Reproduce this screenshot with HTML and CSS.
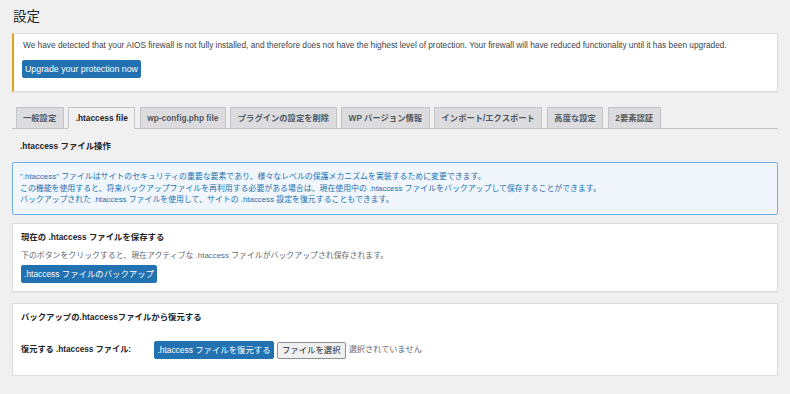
FILE: index.html
```html
<!DOCTYPE html>
<html lang="ja">
<head>
<meta charset="utf-8">
<title>設定</title>
<link rel="stylesheet" href="styles.css">
</head>
<body>
<div class="wrap">
  <h1 class="page-title">設定</h1>

  <div class="notice">
    <p class="notice-text">We have detected that your AIOS firewall is not fully installed, and therefore does not have the highest level of protection. Your firewall will have reduced functionality until it has been upgraded.</p>
    <button class="btn btn-primary notice-btn">Upgrade your protection now</button>
  </div>

  <nav class="tabs">
    <span class="tab">一般設定</span>
    <span class="tab active">.htaccess file</span>
    <span class="tab">wp-config.php file</span>
    <span class="tab">プラグインの設定を削除</span>
    <span class="tab">WP バージョン情報</span>
    <span class="tab">インポート/エクスポート</span>
    <span class="tab">高度な設定</span>
    <span class="tab">2要素認証</span>
  </nav>

  <h2 class="section-title">.htaccess ファイル操作</h2>

  <div class="info">
    <p>".htaccess" ファイルはサイトのセキュリティの重要な要素であり、様々なレベルの保護メカニズムを実装するために変更できます。</p>
    <p>この機能を使用すると、将来バックアップファイルを再利用する必要がある場合は、現在使用中の .htaccess ファイルをバックアップして保存することができます。</p>
    <p>バックアップされた .htaccess ファイルを使用して、サイトの .htaccess 設定を復元することもできます。</p>
  </div>

  <div class="card card-save">
    <h3 class="card-title">現在の .htaccess ファイルを保存する</h3>
    <p class="card-desc">下のボタンをクリックすると、現在アクティブな .htaccess ファイルがバックアップされ保存されます。</p>
    <button class="btn btn-primary">.htaccess ファイルのバックアップ</button>
  </div>

  <div class="card card-restore">
    <h3 class="card-title">バックアップの.htaccessファイルから復元する</h3>
    <div class="restore-row">
      <span class="restore-label">復元する .htaccess ファイル:</span>
      <button class="btn btn-primary">.htaccess ファイルを復元する</button>
      <span class="file-btn">ファイルを選択</span>
      <span class="file-none">選択されていません</span>
    </div>
  </div>
</div>
</body>
</html>
```

FILE: styles.css
```css
* { box-sizing: border-box; }

html, body {
  margin: 0;
  padding: 0;
  background: #f0f0f1;
}

body {
  font-family: "Liberation Sans", "Noto Sans CJK JP", sans-serif;
  font-size: 7.9px;
  line-height: 1.5;
  color: #3c434a;
}

.wrap {
  padding: 0 12px 0 12px;
}

.page-title {
  margin: 0;
  padding: 8px 0 0 1px;
  height: 33px;
  font-size: 13.5px;
  font-weight: 400;
  line-height: 18px;
  color: #1d2327;
}

.notice {
  background: #fff;
  border: 1px solid #dcdcde;
  border-left: 2px solid #dba617;
  height: 59px;
  padding: 5px 9px 0 8px;
  box-shadow: 0 1px 1px rgba(0,0,0,0.04);
}

.notice-text {
  margin: 0 0 9px 1px;
  font-size: 8.3px;
  line-height: 12px;
  color: #3c434a;
}

.btn {
  display: inline-flex;
  align-items: center;
  justify-content: center;
  height: 18px;
  padding: 0;
  border: 1px solid #2271b1;
  border-radius: 2px;
  background: #2271b1;
  color: #fff;
  font-family: inherit;
  font-size: 8px;
  line-height: 1;
  white-space: nowrap;
  cursor: pointer;
}

.notice-btn {
  width: 119px;
  font-size: 8.8px;
}

.tabs {
  display: flex;
  gap: 4.5px;
  margin-top: 15px;
  padding-left: 3.5px;
  border-bottom: 1px solid #c3c4c7;
  height: 22px;
}

.tab {
  display: flex;
  align-items: center;
  height: 21px;
  padding: 0 6.5px;
  background: #dcdcde;
  border: 1px solid #c3c4c7;
  border-bottom: none;
  font-size: 8.3px;
  font-weight: 700;
  color: #50575e;
  white-space: nowrap;
}

.tab.active {
  background: #f0f0f1;
  color: #1d2327;
  height: 22px;
  border-bottom: 1px solid #f0f0f1;
}

.section-title {
  margin: 0;
  padding: 11px 0 0 8px;
  height: 33px;
  font-size: 8.4px;
  font-weight: 700;
  line-height: 12px;
  color: #1d2327;
}

.info {
  background: #f0f6fc;
  border: 1px solid #72aee6;
  border-radius: 2px;
  height: 53px;
  padding: 8px 7px 0 7px;
  color: #2271b1;
}

.info p {
  margin: 0;
  line-height: 11.6px;
}

.card {
  background: #fff;
  border: 1px solid #dcdcde;
  margin-top: 8px;
  padding: 0 8px;
  box-shadow: 0 1px 1px rgba(0,0,0,0.04);
}

.card-save {
  height: 69px;
}

.card-restore {
  margin-top: 11px;
  height: 73px;
}

.card-title {
  margin: 0;
  padding-top: 7px;
  font-size: 8.4px;
  font-weight: 700;
  line-height: 12px;
  color: #1d2327;
}

.card-desc {
  margin: 7px 0 3px 0;
  line-height: 12px;
  color: #646970;
}

.card-save .btn {
  width: 136px;
  font-size: 8.4px;
}

.restore-row {
  display: flex;
  align-items: center;
  margin-top: 18px;
}

.restore-label {
  width: 133px;
  font-weight: 700;
  font-size: 8.2px;
  color: #1d2327;
}

.restore-row .btn {
  width: 120px;
  font-size: 8.4px;
}

.file-btn {
  display: inline-flex;
  align-items: center;
  height: 17px;
  margin-left: 3px;
  padding: 0 4px;
  background: #f0f0f0;
  border: 1px solid #8c8f94;
  border-radius: 2px;
  color: #1d2327;
  font-size: 8.4px;
}

.file-none {
  margin-left: 3px;
  color: #646970;
  font-size: 8.2px;
}
```
